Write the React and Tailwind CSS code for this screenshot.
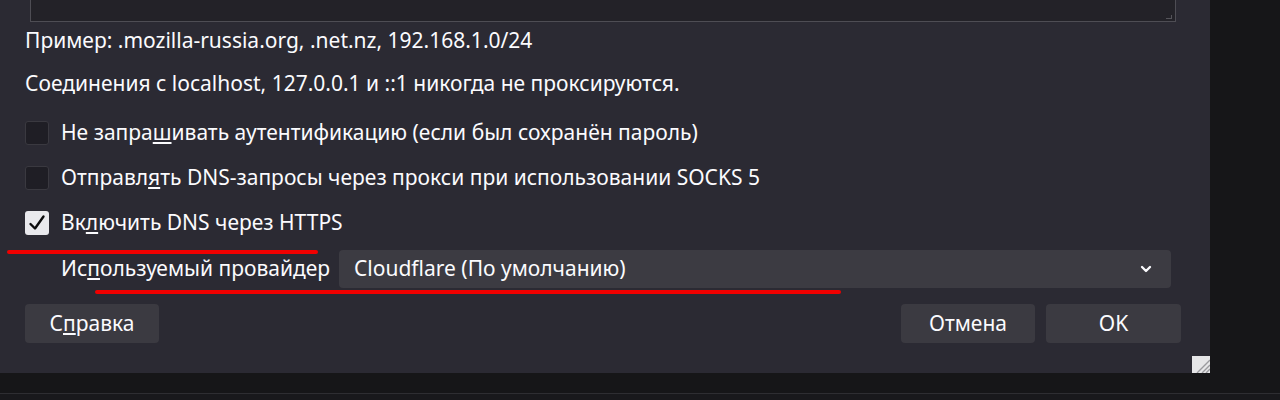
import { ChevronDown } from 'lucide-react';

const font = { fontFamily: '"Noto Sans", "Open Sans", sans-serif' };

function Checkbox({ checked, children }) {
  return (
    <div className="flex items-center gap-3 h-6">
      {checked ? (
        <span className="w-6 h-6 rounded-[3px] bg-[#e9e9ed] flex items-center justify-center">
          <svg width="20" height="20" viewBox="0 0 20 20">
            <path d="M3.5 11 L8 15.5 L16.5 3.5" fill="none" stroke="#0c0c0d" strokeWidth="2.4" strokeLinecap="round" strokeLinejoin="round" />
          </svg>
        </span>
      ) : (
        <span className="w-6 h-6 rounded-[3px] bg-[#1f1e25] border border-[#3a3940]" />
      )}
      <span>{children}</span>
    </div>
  );
}

function Button({ children, className = '' }) {
  return (
    <button className={`h-[39px] rounded-[4px] bg-[#3b3a41] text-[#fbfbfe] ${className}`}>{children}</button>
  );
}

export default function App() {
  return (
    <div className="w-[1280px] h-[400px] bg-[#161618] flex flex-col overflow-hidden" style={font}>
      <div className="flex">
        <div className="relative w-[1210px] h-[373px] bg-[#2b2a33] text-[#fbfbfe] text-[21px] flex flex-col">
          <div className="ml-[30px] w-[1146px] h-[22px] bg-[#232228] border-x border-b border-[#4e4d54] relative">
            <span className="absolute right-[3px] bottom-[2px] w-[6px] h-[4px] border-b border-r border-[#55545a]" />
          </div>

          <div className="pl-[25px] flex flex-col">
            <p className="mt-[6px] leading-6">Пример: .mozilla-russia.org, .net.nz, 192.168.1.0/24</p>
            <p className="mt-[19px] leading-6">Соединения с localhost, 127.0.0.1 и ::1 никогда не проксируются.</p>

            <div className="mt-[26px] flex flex-col gap-[21px]">
              <Checkbox>
                Не запра<u className="underline-offset-2">ш</u>ивать аутентификацию (если был сохранён пароль)
              </Checkbox>
              <Checkbox>
                Отправл<u className="underline-offset-2">я</u>ть DNS-запросы через прокси при использовании SOCKS 5
              </Checkbox>
              <Checkbox checked>
                Вк<u className="underline-offset-2">л</u>ючить DNS через HTTPS
              </Checkbox>
            </div>

            <div className="mt-[15px] ml-[36px] flex items-center gap-[9px]">
              <span>
                Ис<u className="underline-offset-2">п</u>ользуемый провайдер
              </span>
              <div className="w-[832px] h-[38px] rounded-[4px] bg-[#3c3b42] flex items-center justify-between pl-[15px] pr-[17px]">
                <span>Cloudflare (По умолчанию)</span>
                <ChevronDown size={16} strokeWidth={3.5} color="#fbfbfe" />
              </div>
            </div>

            <div className="mt-[16px] pr-[29px] flex items-center">
              <Button className="w-[134px]">
                С<u className="underline-offset-2">п</u>равка
              </Button>
              <div className="flex-1" />
              <div className="flex gap-[11px]">
                <Button className="w-[134px]">Отмена</Button>
                <Button className="w-[135px]">OK</Button>
              </div>
            </div>
          </div>

          {/* red marker strokes */}
          <span className="absolute left-[7px] top-[250px] w-[311px] h-[4px] rounded-full bg-[#f00000]" />
          <span className="absolute left-[95px] top-[290px] w-[746px] h-[4px] rounded-full bg-[#f00000]" />

          {/* resize grip */}
          <svg className="absolute right-0 bottom-0" width="18" height="17" viewBox="0 0 18 17">
            <rect width="18" height="17" fill="#e6e6e8" />
            <path d="M18 4 L5 17 M18 9 L10 17 M18 13 L14 17" stroke="#9a9a9e" strokeWidth="1.4" />
          </svg>
        </div>
      </div>
      <div className="h-[20px]" />
      <div className="flex-1 border-t border-[#2e2e32] bg-[#19191c]" />
    </div>
  );
}
